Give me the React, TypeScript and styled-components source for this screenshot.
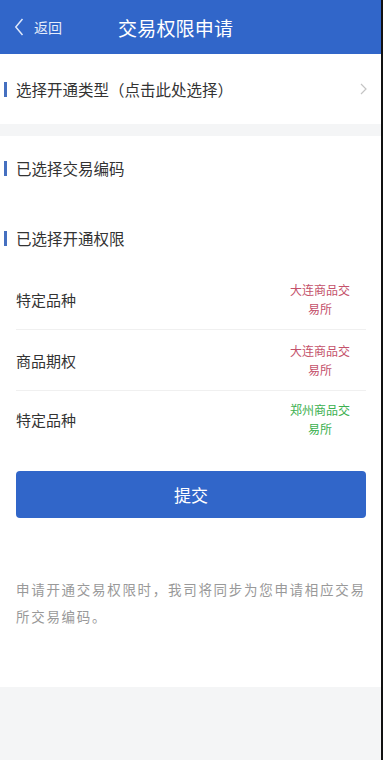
import React from "react";
import styled, { createGlobalStyle } from "styled-components";

const Global = createGlobalStyle`
  html, body { margin: 0; padding: 0; background: #111; }
  body { font-family: "Noto Sans CJK SC", "Noto Sans", sans-serif; }
  * { box-sizing: border-box; }
`;

const Page = styled.div`
  width: 381px;
  min-height: 760px;
  background: #f4f5f6;
  display: flex;
  flex-direction: column;
`;

const Header = styled.header`
  height: 54px;
  background: #3166c9;
  display: flex;
  align-items: center;
  padding-left: 14px;
  color: #fff;
`;

const Back = styled.div`
  display: flex;
  align-items: center;
  gap: 10px;
  width: 104px;
  font-size: 14px;
  color: #e6edfb;
`;

const Title = styled.h1`
  margin: 0;
  font-size: 19px;
  font-weight: 400;
  letter-spacing: 0.2px;
`;

const Card = styled.section`
  background: #fff;
`;

const TypeRow = styled.div`
  height: 70px;
  display: flex;
  align-items: center;
  justify-content: space-between;
  padding: 0 14px 0 0;
`;

const SectionTitle = styled.div<{ $mt?: number }>`
  display: flex;
  align-items: center;
  gap: 9px;
  padding-left: 4px;
  margin-top: ${(p) => p.$mt ?? 0}px;
  font-size: 15.5px;
  line-height: 20px;
  color: #333;
  &::before {
    content: "";
    width: 3px;
    height: 15px;
    background: #4570c0;
  }
`;

const Body = styled.section`
  margin-top: 12px;
  background: #fff;
  padding: 22px 0 57px;
`;

const List = styled.div`
  margin: 21px 15px 0 16px;
`;

const Row = styled.div<{ $last?: boolean }>`
  height: ${(p) => (p.$last ? 56 : 61)}px;
  display: flex;
  align-items: center;
  justify-content: space-between;
  border-bottom: ${(p) => (p.$last ? "none" : "1px solid #f0f0f0")};
`;

const Label = styled.span`
  font-size: 15px;
  color: #333;
`;

const Exchange = styled.span<{ $color: string }>`
  width: 62px;
  margin-right: 15px;
  text-align: center;
  font-size: 12px;
  line-height: 19px;
  color: ${(p) => p.$color};
`;

const Submit = styled.button`
  display: block;
  width: 350px;
  height: 47px;
  margin: 24px 0 0 16px;
  border: none;
  border-radius: 4px;
  background: #3166c9;
  color: #fff;
  font-family: inherit;
  font-size: 17px;
`;

const Note = styled.p`
  margin: 58px 15px 0 16px;
  font-size: 13.5px;
  line-height: 27px;
  letter-spacing: 1.7px;
  color: #999;
`;

const rows = [
  { label: "特定品种", ex: "大连商品交易所", color: "#c4516b" },
  { label: "商品期权", ex: "大连商品交易所", color: "#c4516b" },
  { label: "特定品种", ex: "郑州商品交易所", color: "#3bb04f" },
];

export default function App() {
  return (
    <Page>
      <Global />
      <Header>
        <Back>
          <svg width="10" height="18" viewBox="0 0 10 18">
            <path d="M8.5 1 L1.8 9 L8.5 17" fill="none" stroke="#dfe8fa" strokeWidth="1.5" />
          </svg>
          返回
        </Back>
        <Title>交易权限申请</Title>
      </Header>
      <Card>
        <TypeRow>
          <SectionTitle>选择开通类型（点击此处选择）</SectionTitle>
          <svg width="7" height="12" viewBox="0 0 7 12">
            <path d="M1 1 L6 6 L1 11" fill="none" stroke="#c4c4c4" strokeWidth="1.2" />
          </svg>
        </TypeRow>
      </Card>
      <Body>
        <SectionTitle>已选择交易编码</SectionTitle>
        <SectionTitle $mt={50}>已选择开通权限</SectionTitle>
        <List>
          {rows.map((r, i) => (
            <Row key={i} $last={i === rows.length - 1}>
              <Label>{r.label}</Label>
              <Exchange $color={r.color}>{r.ex}</Exchange>
            </Row>
          ))}
        </List>
        <Submit>提交</Submit>
        <Note>申请开通交易权限时，我司将同步为您申请相应交易所交易编码。</Note>
      </Body>
    </Page>
  );
}
